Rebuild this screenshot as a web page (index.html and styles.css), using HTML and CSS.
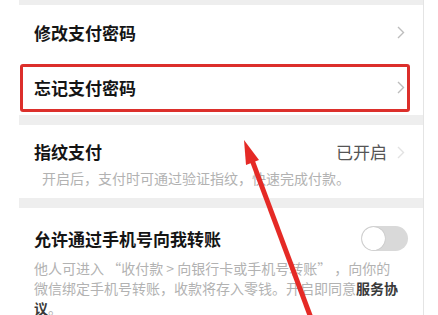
FILE: index.html
```html
<!DOCTYPE html>
<html lang="zh-CN">
<head>
    <meta charset="UTF-8">
    <meta name="viewport" content="width=device-width, initial-scale=1.0">
    <title>支付设置</title>
    <link rel="stylesheet" href="styles.css">
</head>
<body>

    <div class="screen">
        <div class="gap gap-top"></div>

        <div class="cell">
            <span class="title">修改支付密码</span>
            <svg class="chevron" width="8" height="13" viewBox="0 0 8 13"><path d="M1 1l5.5 5.5L1 12" fill="none" stroke="#bdbdbd" stroke-width="1.4"/></svg>
        </div>

        <div class="cell cell-marked">
            <span class="title">忘记支付密码</span>
            <svg class="chevron" width="8" height="13" viewBox="0 0 8 13"><path d="M1 1l5.5 5.5L1 12" fill="none" stroke="#bdbdbd" stroke-width="1.4"/></svg>
            <!-- 红框标注 -->
            <div class="mark-box"></div>
        </div>

        <div class="gap"></div>

        <div class="block">
            <div class="block-head">
                <span class="title">指纹支付</span>
                <span class="value">已开启</span>
                <svg class="chevron light" width="8" height="13" viewBox="0 0 8 13"><path d="M1 1l5.5 5.5L1 12" fill="none" stroke="#e2e2e2" stroke-width="1.4"/></svg>
            </div>
            <p class="hint hint-indent">开启后，支付时可通过验证指纹，快速完成付款。</p>
        </div>

        <div class="gap"></div>

        <div class="block block-last">
            <div class="block-head">
                <span class="title">允许通过手机号向我转账</span>
                <span class="switch"><span class="knob"></span></span>
            </div>
            <p class="hint">他人可进入 “收付款 &gt; 向银行卡或手机号转账” ，向你的<br>微信绑定手机号转账，收款将存入零钱。开启即同意<b>服务协议</b>。</p>
        </div>
    </div>

    <!-- 红色箭头标注 -->
    <svg class="arrow" width="438" height="315" viewBox="0 0 438 315">
        <line x1="311" y1="318" x2="252" y2="160" stroke="#e52a26" stroke-width="5"/>
        <polygon points="244,140 259,160 246,165" fill="#e52a26"/>
    </svg>

</body>
</html>
```

FILE: styles.css
```css
* {
    box-sizing: border-box;
    margin: 0;
    padding: 0;
}

body {
    width: 438px;
    height: 315px;
    overflow: hidden;
    position: relative;
    background-color: #fff;
    font-family: "Noto Sans CJK SC", "Noto Sans", sans-serif;
    color: #111;
}

.screen {
    margin-left: 19px;
    width: 405px;
    border-right: 1px solid #e4e4e4;
    background-color: #fff;
}

.gap {
    height: 10px;
    background-color: #eeeeee;
}

.gap-top {
    height: 5px;
}

.cell {
    display: flex;
    justify-content: space-between;
    align-items: center;
    height: 55px;
    padding: 0 18px 0 15px;
    position: relative;
}

.title {
    font-size: 17px;
    font-weight: 700;
    line-height: 24px;
    color: #151515;
}

.chevron {
    display: block;
    flex-shrink: 0;
}

.mark-box {
    position: absolute;
    left: 1px;
    right: 13px;
    top: 4px;
    bottom: 3px;
    border: 3px solid #dc2f2b;
    border-radius: 3px;
}

.block {
    padding: 15px 15px 10px 15px;
}

.block-last {
    padding-top: 18px;
}

.block-head {
    display: flex;
    align-items: center;
}

.block-head .title {
    flex: 1;
}

.value {
    font-size: 17px;
    line-height: 24px;
    color: #555;
    margin-right: 10px;
}

.chevron.light {
    margin-right: 3px;
}

.hint {
    margin-top: 4px;
    font-size: 14px;
    line-height: 20px;
    color: #b2b2b2;
}

.hint-indent {
    padding-left: 8px;
}

.block-last .hint {
    margin-top: 7px;
    line-height: 20px;
    padding-right: 5px;
}

.hint b {
    color: #3a3a3a;
    font-weight: 700;
}

.switch {
    display: flex;
    align-items: center;
    width: 47px;
    height: 25px;
    border-radius: 13px;
    background-color: #d9d9d9;
    padding: 1px;
}

.knob {
    width: 23px;
    height: 23px;
    border-radius: 50%;
    background-color: #fff;
    box-shadow: 0 0 1px rgba(0, 0, 0, 0.35);
}

.arrow {
    position: absolute;
    left: 0;
    top: 0;
    pointer-events: none;
}
```
